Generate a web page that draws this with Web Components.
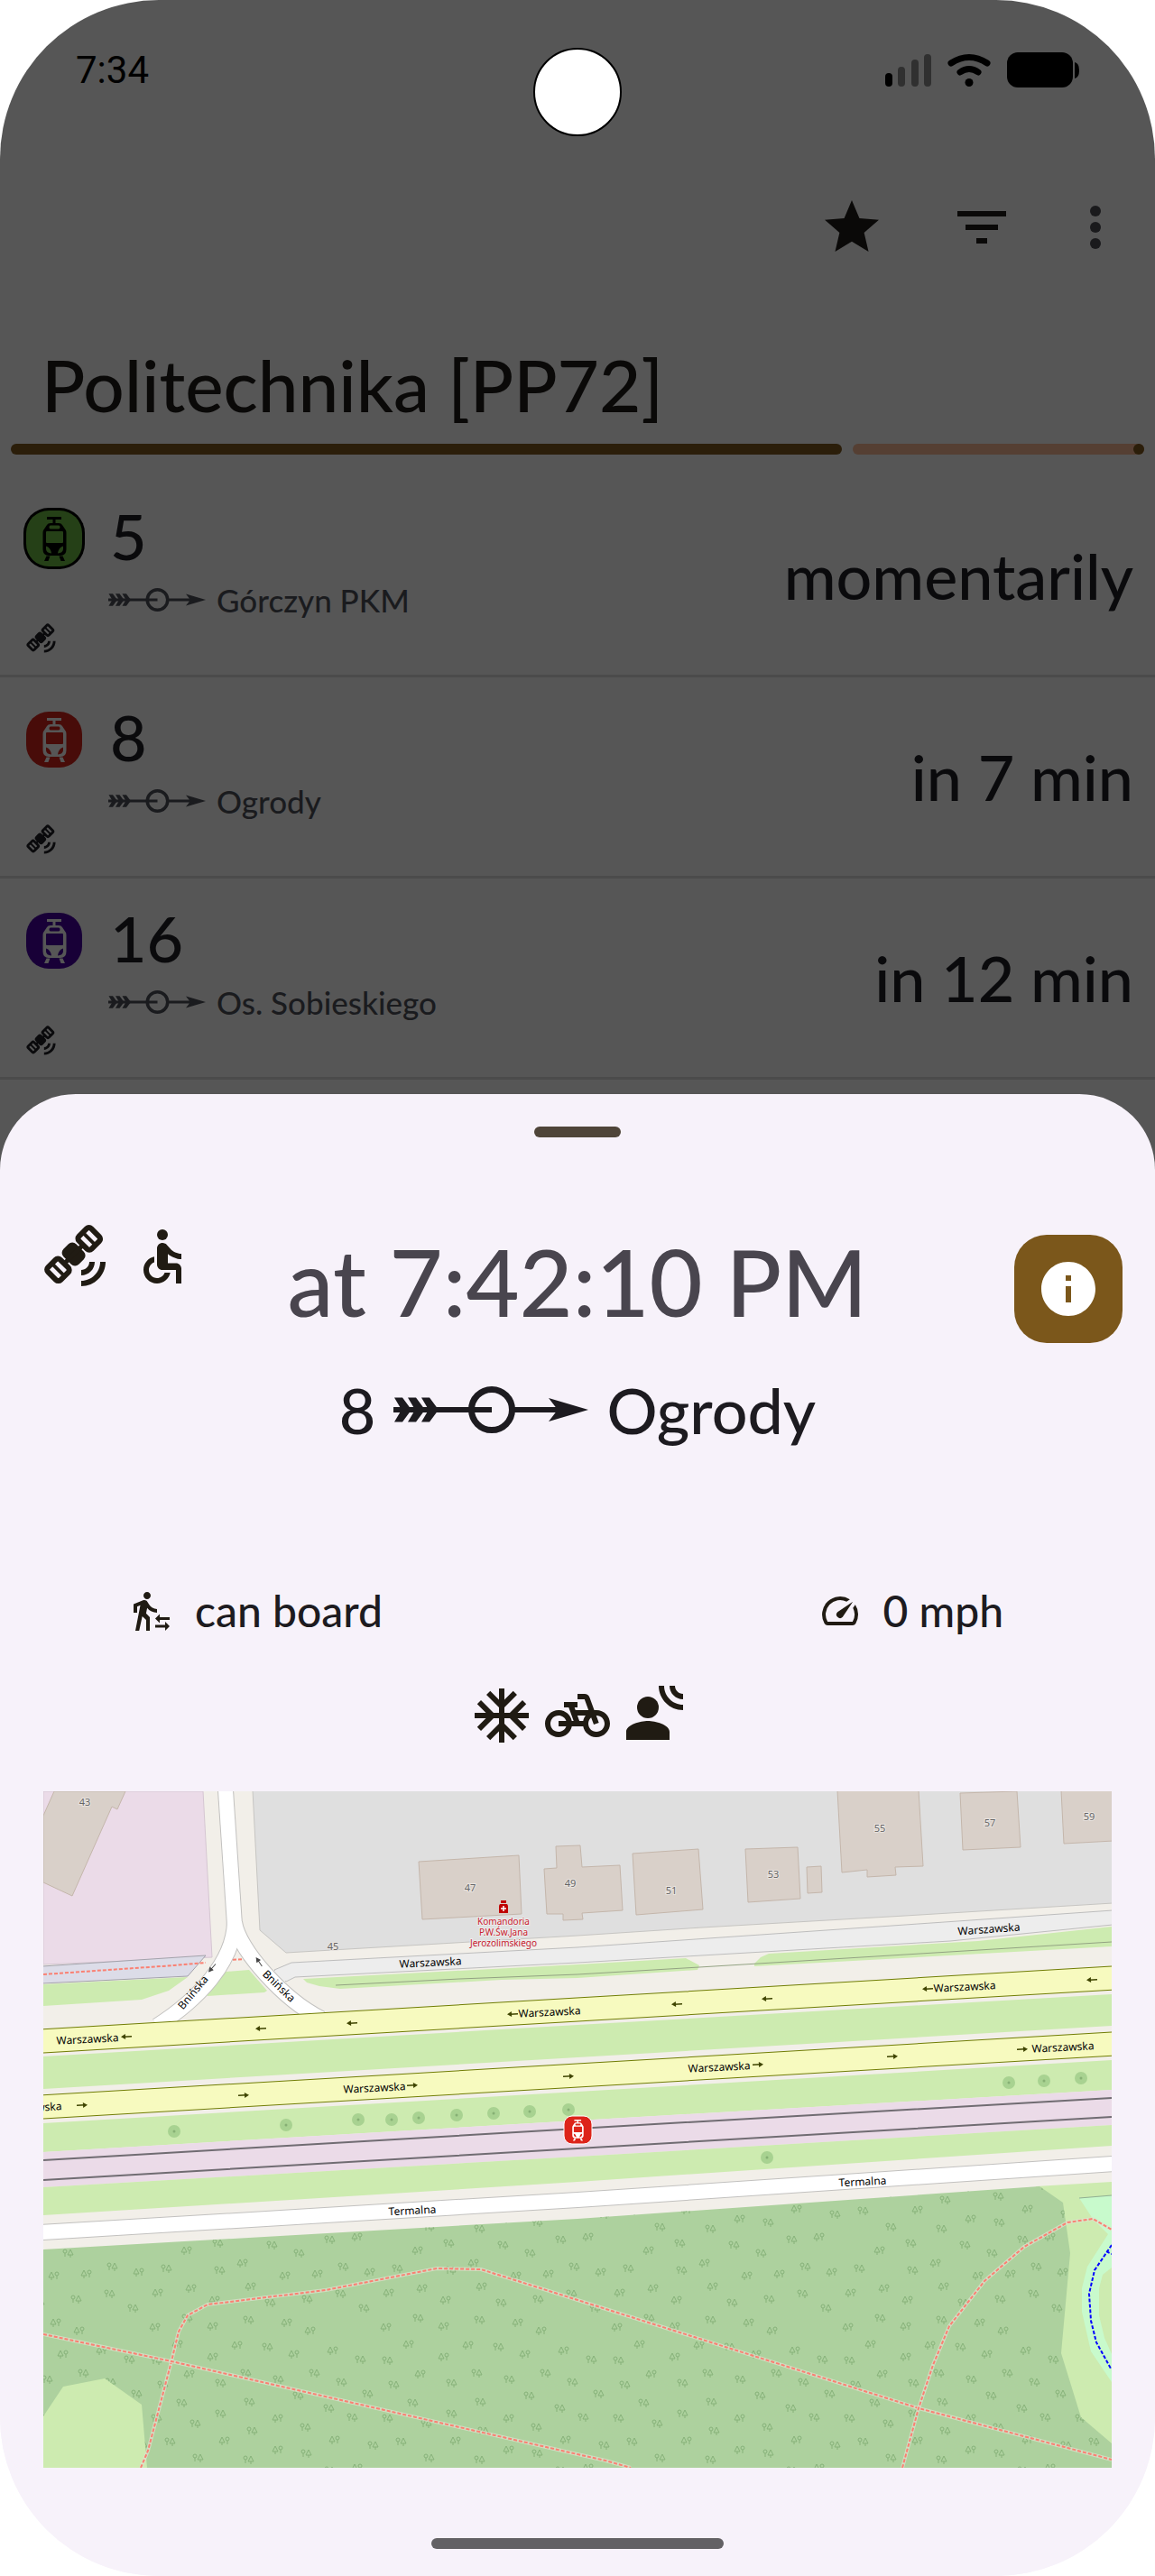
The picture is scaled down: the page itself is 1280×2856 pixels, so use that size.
<!DOCTYPE html>
<html lang="en">
<head>
<meta charset="utf-8">
<meta name="viewport" content="width=device-width, initial-scale=1">
<title>Politechnika [PP72]</title>
<style>
  body {
    margin: 0;
    background: #fff;
    font-family: Lato, "Noto Sans", sans-serif;
    font-weight: 500;
  }
</style>
</head>
<body>
<transit-phone>
  <status-bar slot="status" time="7:34"></status-bar>
  <stop-header slot="header">Politechnika [PP72]</stop-header>
  <departure-row line="5" when="momentarily" tone="green">Górczyn PKM</departure-row>
  <departure-row line="8" when="in 7 min" tone="red">Ogrody</departure-row>
  <departure-row line="16" when="in 12 min" tone="violet">Os. Sobieskiego</departure-row>
  <departure-sheet slot="sheet">
    <span slot="time">at 7:42:10 PM</span>
    <span slot="line">8</span>
    <span slot="headsign">Ogrody</span>
    <icon-fact slot="facts" icon="board">can board</icon-fact>
    <icon-fact slot="facts" icon="speed">0 mph</icon-fact>
    <vehicle-map slot="map"></vehicle-map>
  </departure-sheet>
</transit-phone>

<script>
const TRAM = `
  <path fill-rule="evenodd" d="M5 0H21V3H14.5V7H18Q21 7 22 9L26 15Q26.5 16 26.5 18V36Q26.5 43 20 43H7Q.5 43 .5 36V18Q.5 16 1 15L5 9Q6 7 9 7H11.5V3H5Z
    M9 9.5Q7.5 9.5 7.5 11.5T9 13.5H18Q19.5 13.5 19.5 11.5T18 9.5Z
    M5 16Q4 16 4 17V28Q4 29 5 29H22Q23 29 23 28V17Q23 16 22 16Z
    M4 32.500Q9 34 10 40.500Q4.500 40 4 36Z M23 32.500Q18 34 17 40.500Q22.500 40 23 36Z"/>
  <path d="M4.500 43.500H8.500L6.500 49H2Z M18.500 43.500H22.500L25 49H20.500Z"/>`

const ICONS = {
  star: '<path d="M12 17.27L18.18 21l-1.64-7.03L22 9.24l-7.19-.61L12 2 9.19 8.63 2 9.24l5.46 4.73L5.82 21z"/>',
  filter: '<path d="M10 18h4v-2h-4v2zM3 6v2h18V6H3zm3 7h12v-2H6v2z"/>',
  more: '<circle cx="12" cy="6" r="2"/><circle cx="12" cy="12" r="2"/><circle cx="12" cy="18" r="2"/>',
  info: '<path d="M12 2C6.480 2 2 6.480 2 12s4.480 10 10 10 10-4.480 10-10S17.520 2 12 2zm1 15h-2v-6h2v6zm0-8h-2V7h2v2z"/>',
  satellite: `
    <g transform="translate(11.200 11.200) rotate(-45)">
      <rect x="-3.300" y="-4" width="6.600" height="8" rx="2"/>
      <path d="M-5 0H5" stroke="currentColor" stroke-width="1.700"/>
      <g fill="none" stroke="currentColor">
        <rect x="4.900" y="-3.300" width="6.400" height="6.600" rx="1.200" stroke-width="2"/>
        <rect x="-11.300" y="-3.300" width="6.400" height="6.600" rx="1.200" stroke-width="2"/>
        <path d="M8.100 -3V3M-8.100 -3V3" stroke-width="1.300"/>
      </g>
    </g>
    <path d="M14 19v-2c1.660 0 3-1.340 3-3h2c0 2.760-2.240 5-5 5zM14 23v-2c3.870 0 7-3.130 7-7h2c0 4.970-4.030 9-9 9z"/>`,
  wheelchair: '<circle cx="12" cy="4" r="2"/><path d="M19 13v-2c-1.540.02-3.090-.75-4.070-1.830l-1.290-1.430c-.17-.19-.38-.34-.61-.45-.01 0-.01-.01-.02-.01H13c-.35-.2-.75-.3-1.190-.26C10.760 7.110 10 8.040 10 9.090V15c0 1.100.9 2 2 2h5v5h2v-5.500c0-1.100-.9-2-2-2h-3v-3.450c1.290 1.070 3.250 1.940 5 1.950zm-6.170 5c-.41 1.160-1.520 2-2.830 2-1.660 0-3-1.340-3-3 0-1.310.84-2.410 2-2.830V12.100c-2.280.46-4 2.480-4 4.900 0 2.760 2.240 5 5 5 2.420 0 4.440-1.720 4.900-4h-2.070z"/>',
  board: '<path d="M16.490 15.500v-1.750L14 16.250l2.490 2.500V17H22v-1.500zM19.510 19.750H14v1.500h5.510V23L22 20.500 19.510 18zM9.500 5.500c1.100 0 2-.9 2-2s-.9-2-2-2-2 .9-2 2 .9 2 2 2zM5.750 8.900 3 23h2.100l1.750-8L9 17v6h2v-7.550L8.950 13.400l.6-3C10.850 12 12.800 13 15 13v-2c-1.850 0-3.450-1-4.350-2.450l-.95-1.600C9.350 6.350 8.700 6 8 6c-.25 0-.5.05-.75.15L2 8.300V13h2V9.650l1.750-.75"/>',
  speed: '<path d="M20.380 8.570l-1.230 1.850a8 8 0 0 1-.22 7.580H5.070A8 8 0 0 1 15.580 6.850l1.850-1.230A10 10 0 0 0 3.350 19a2 2 0 0 0 1.720 1h13.850a2 2 0 0 0 1.740-1 10 10 0 0 0-.27-10.440zM10.590 15.410a2 2 0 0 0 2.830 0l5.660-8.490-8.490 5.660a2 2 0 0 0 0 2.830z"/>',
  snow: '<path d="M22 11h-4.170l3.240-3.240-1.410-1.420L15 11h-2V9l4.660-4.660-1.420-1.410L13 6.170V2h-2v4.170L7.760 2.930 6.340 4.340 11 9v2H9L4.340 6.340 2.930 7.760 6.170 11H2v2h4.170l-3.240 3.240 1.410 1.420L9 13h2v2l-4.660 4.660 1.420 1.410L11 17.830V22h2v-4.170l3.240 3.240 1.420-1.410L13 15v-2h2l4.660 4.660 1.410-1.420L17.830 13H22z"/>',
  bike: '<path d="M18.180 10l-1.700-4.680C16.190 4.530 15.440 4 14.600 4H12v2h2.600l1.460 4h-4.810l-.36-1H12V7H7v2h1.750l1.820 5H9.900c-.44-2.230-2.310-3.880-4.650-3.990C2.450 9.870 0 12.200 0 15c0 2.800 2.200 5 5 5 2.460 0 4.450-1.690 4.900-4h4.200c.44 2.230 2.310 3.880 4.650 3.990 2.800.13 5.250-2.190 5.250-5 0-2.800-2.200-5-5-5h-.82zM7.820 16c-.4 1.170-1.490 2-2.820 2-1.680 0-3-1.320-3-3s1.320-3 3-3c1.330 0 2.420.83 2.820 2H5v2h2.820zm6.280-2h-1.400l-.73-2H15c-.44.58-.76 1.250-.9 2zm4.900 4c-1.680 0-3-1.320-3-3 0-.93.41-1.730 1.050-2.280l.96 2.640 1.880-.68-.97-2.670c.03 0 .06-.01.08-.01 1.680 0 3 1.320 3 3s-1.320 3-3 3z"/>',
  voice: '<circle cx="10" cy="9" r="4"/><path d="M10 14c-2.670 0-8 1.340-8 4v3h16v-3c0-2.660-5.330-4-8-4zM14 1h2c0 3.870 3.130 7 7 7v2c-4.970 0-9-4.030-9-9zM18 1h2c0 1.660 1.340 3 3 3v2c-2.760 0-5-2.240-5-5z"/>',
}

// Base class: shadow root from the subclass's css and html
class BaseElement extends HTMLElement {
  constructor() {
    super()
    this.attachShadow({ mode: 'open' })
  }

  connectedCallback() {
    this.shadowRoot.innerHTML = `<style>${this.css()}</style>${this.html()}`
  }
}

/** <ui-icon name="star"> — 24-unit glyph, sized by --icon-size */
class UiIcon extends BaseElement {
  css() {
    return `
      :host { display: block; flex: none; width: var(--icon-size, 72px); height: var(--icon-size, 72px); }
      svg { display: block; width: 100%; height: 100%; fill: currentColor; overflow: visible; }
    `
  }
  html() {
    return `<svg viewBox="0 0 24 24" aria-hidden="true">${ICONS[this.getAttribute('name')]}</svg>`
  }
}

/** <heading-arrow> — feathered arrow through a ring */
class HeadingArrow extends BaseElement {
  css() {
    return `
      :host { display: block; flex: none; width: var(--arrow-width, 108px); }
      svg { display: block; width: 100%; fill: currentColor; }
    `
  }
  html() {
    const feather = 'M1 14.500H10L20 28L10 41.500H1L9 28Z'
    return `
      <svg viewBox="0 0 216 56" aria-hidden="true">
        <path d="${feather}"/>
        <path d="${feather}" transform="translate(15)"/>
        <path d="${feather}" transform="translate(30)"/>
        <path d="M0 25H109V31H0ZM134 25H186V31H134ZM172 15L216 28L172 41L182 28Z"/>
        <circle cx="109" cy="28" r="22.500" fill="none" stroke="currentColor" stroke-width="7"/>
      </svg>`
  }
}

class StatusBar extends BaseElement {
  css() {
    return `
      :host {
        display: flex;
        align-items: center;
        justify-content: space-between;
        height: 156px;
        padding: 0 84px;
        color: #000;
        font: 42px/48px Roboto, sans-serif;
        position: relative;
      }
      .camera {
        position: absolute;
        left: 50%;
        top: 53px;
        width: 98px;
        height: 98px;
        margin-left: -49px;
        box-sizing: border-box;
        border: 2px solid #000;
        border-radius: 50%;
        background: #fff;
      }
      .icons { width: 215px; height: 40px; }
    `
  }
  html() {
    return `
      <time>${this.getAttribute('time')}</time>
      <div class="camera"></div>
      <svg class="icons" viewBox="0 0 215 40" aria-hidden="true">
        <rect x="0" y="23" width="8" height="15" rx="4"/>
        <g fill="#303030">
          <rect x="14" y="16" width="8" height="22" rx="4"/>
          <rect x="29" y="8" width="8" height="30" rx="4"/>
          <rect x="43" y="2" width="8" height="36" rx="4"/>
        </g>
        <g fill="none" stroke="#000" stroke-width="7" stroke-linecap="round">
          <path d="M73 12Q93 -1 113 12"/>
          <path d="M83 22Q93 15 103 22"/>
        </g>
        <circle cx="93" cy="33.500" r="4.500"/>
        <rect x="135" y="0" width="73" height="39" rx="12"/>
        <path d="M210 11Q215 12 215 20T210 29Z"/>
      </svg>`
  }
}

class StopHeader extends BaseElement {
  css() {
    return `
      :host { display: block; padding-top: 60px; color: #0a0908; }
      nav { display: flex; justify-content: flex-end; padding-right: 30px; }
      button {
        display: block;
        padding: 0;
        border: 0;
        background: none;
        color: inherit;
        cursor: pointer;
      }
      button + button { margin-left: 72px; }
      button.more { margin-left: 54px; color: #1a1a1c; }
      h1 { margin: 90px 46px 18px; font-weight: 500; font-size: 80px; line-height: 96px; }
      .progress { display: flex; gap: 12px; margin: 0 12px; }
      .done, .left { height: 12px; border-radius: 6px; }
      .done { flex: 74; background: #2b1e0a; }
      .left { flex: 26; background: #553f33; }
      .left::after {
        content: "";
        display: block;
        width: 12px;
        height: 12px;
        margin-left: auto;
        border-radius: 6px;
        background: #2b1e0a;
      }
    `
  }
  html() {
    return `
      <nav>
        <button aria-label="Favourite"><ui-icon name="star"></ui-icon></button>
        <button aria-label="Filter"><ui-icon name="filter"></ui-icon></button>
        <button class="more" aria-label="More"><ui-icon name="more"></ui-icon></button>
      </nav>
      <h1><slot></slot></h1>
      <div class="progress" role="progressbar" aria-valuenow="74">
        <div class="done"></div>
        <div class="left"></div>
      </div>`
  }
}

class DepartureRow extends BaseElement {
  css() {
    return `
      :host {
        display: flex;
        height: 220px;
        border-bottom: 3px solid #4b4b4b;
        color: #0a0a0c;
      }
      .marks {
        display: flex;
        flex-direction: column;
        justify-content: space-between;
        box-sizing: border-box;
        width: 120px;
        padding: 38px 29px 23px;
        --icon-size: 34px;
      }
      .badge {
        display: flex;
        align-items: center;
        justify-content: center;
        width: 62px;
        height: 62px;
        border-radius: 25px;
      }
      .badge svg { width: 27px; height: 49px; fill: currentColor; }
      .red { background: #480c09; color: #565656; }
      .violet { background: #180037; color: #565656; }
      .green { background: #254017; color: #000; box-shadow: 0 0 0 3px #000; }
      .main { flex: 1; padding-top: 24px; }
      .line { padding-left: 2px; font-size: 70px; line-height: 84px; }
      .heading {
        display: flex;
        align-items: center;
        gap: 12px;
        margin-top: 8px;
        color: #1a1b1e;
        font-size: 35px;
        line-height: 42px;
      }
      .when { align-self: center; padding-right: 24px; font-size: 70px; line-height: 84px; }
    `
  }
  html() {
    return `
      <div class="marks">
        <div class="badge ${this.getAttribute('tone')}"><svg viewBox="0 0 27 49" aria-hidden="true">${TRAM}</svg></div>
        <ui-icon name="satellite"></ui-icon>
      </div>
      <div class="main">
        <div class="line">${this.getAttribute('line')}</div>
        <div class="heading"><heading-arrow></heading-arrow><slot></slot></div>
      </div>
      <div class="when">${this.getAttribute('when')}</div>`
  }
}

class IconFact extends BaseElement {
  css() {
    return `
      :host {
        display: flex;
        align-items: center;
        gap: 24px;
        color: #1d1b20;
        font-size: 48px;
        line-height: 58px;
        --icon-size: 48px;
      }
      ui-icon { color: #201b13; }
    `
  }
  html() {
    return `<ui-icon name="${this.getAttribute('icon')}"></ui-icon><slot></slot>`
  }
}

class DepartureSheet extends BaseElement {
  css() {
    return `
      :host {
        display: block;
        margin-top: 16px;
        padding: 36px 0 30px;
        border-radius: 84px 84px 0 0;
        background: #f7f2fa;
        color: #1d1b20;
      }
      .handle, .home { height: 12px; margin: 0 auto; border-radius: 6px; }
      .handle { width: 96px; background: #4f4539; }
      .home { width: 324px; margin-top: 78px; background: #636164; }
      header {
        display: grid;
        grid-template-columns: 1fr auto 1fr;
        align-items: start;
        padding: 96px 36px 0 48px;
      }
      .flags { display: flex; gap: 24px; color: #201b13; }
      .time { margin-right: 12px; color: #49454e; font-size: 102px; line-height: 128px; }
      button {
        display: grid;
        place-items: center;
        justify-self: end;
        width: 120px;
        height: 120px;
        margin-top: 12px;
        padding: 0;
        border: 0;
        border-radius: 36px;
        background: #7b571b;
        color: #fff;
        cursor: pointer;
      }
      .route {
        display: flex;
        align-items: center;
        justify-content: center;
        gap: 20px;
        margin-top: 32px;
        font-size: 70px;
        line-height: 84px;
        --arrow-width: 216px;
      }
      .facts { display: flex; justify-content: space-between; padding: 152px 168px 0 144px; }
      .amenities { display: flex; justify-content: center; gap: 12px; margin: 51px 0 48px; color: #201b13; }
      .map { margin: 0 48px; }
    `
  }
  html() {
    return `
      <div class="handle"></div>
      <header>
        <div class="flags"><ui-icon name="satellite"></ui-icon><ui-icon name="wheelchair"></ui-icon></div>
        <div class="time"><slot name="time"></slot></div>
        <button aria-label="Details"><ui-icon name="info"></ui-icon></button>
      </header>
      <div class="route">
        <slot name="line"></slot>
        <heading-arrow></heading-arrow>
        <slot name="headsign"></slot>
      </div>
      <div class="facts"><slot name="facts"></slot></div>
      <div class="amenities">
        <ui-icon name="snow"></ui-icon>
        <ui-icon name="bike"></ui-icon>
        <ui-icon name="voice"></ui-icon>
      </div>
      <div class="map"><slot name="map"></slot></div>
      <div class="home"></div>`
  }
}

// Tree pairs of the forest fill, one 256-unit tile: x, y, conifer first (1) or not (0)
const TREES = [
  [33,18,1],[67,10,0],[127,12,0],[191,6,0],[222,3,1],[10,38,0],[69,40,0],[95,32,1],[157,21,0],
  [142,46,1],[178,44,1],[206,36,0],[236,42,1],[1,65,1],[38,60,1],[64,73,1],[104,58,1],[125,76,0],
  [166,72,0],[203,66,0],[229,82,0],[254,103,1],[33,93,0],[62,102,1],[101,95,0],[144,98,1],
  [170,107,1],[23,122,1],[89,123,1],[122,125,0],[152,133,1],[195,129,1],[62,136,1],[225,139,0],
  [255,140,0],[36,155,1],[98,154,0],[174,154,0],[70,165,0],[134,161,0],[204,164,0],[6,167,0],
  [27,187,0],[102,186,0],[156,179,0],[190,193,0],[233,177,0],[70,199,0],[134,204,1],[42,210,0],
  [105,218,0],[164,214,0],[216,203,0],[255,204,0],[14,230,0],[75,229,1],[197,228,1],[239,234,0],
  [45,248,0],[101,250,0],[134,239,1],[165,243,0],
]

const STREET_TREES = [
  [145,377],[269,370],[349,364],[386,364],[416,362],[458,359],[499,357],[539,355],[582,353],
  [1070,323],[1109,321],[1150,318],[802,406],
]

const BUILDINGS = [
  'M0 27L12 0H91L82 20L76 17L32 116L0 101Z',
  'M416 78L527 71L530 136L420 142Z',
  'M568 61L595 60L597 84L639 82L642 132L597 135L598 142L576 143V136H558L555 86L569 85Z',
  'M653 69L726 64L731 131L657 137Z',
  'M778 64L836 62L839 119L781 123Z',
  'M846 84L862 83L863 112L847 113Z',
  'M880 -1H970L975 83L944 84L945 93L913 95V87L885 90Z',
  'M1016 2L1079 0L1083 62L1019 65Z',
  'M1128 -1H1186V55L1131 58Z',
]

const HOUSE_NUMBERS = [
  [46,12,43],[473,107,47],[584,102,49],[696,110,51],[809,92,53],[927,41,55],[1049,35,57],
  [1159,28,59],[321,172,45],
]

const STREET_NAMES = [
  [429,190,-3,'Warszawska'],[1048,153,-4,'Warszawska'],[49,275,-3,'Warszawska'],
  [561,245,-3,'Warszawska'],[1021,217,-3,'Warszawska'],[367,329,-3,'Warszawska'],
  [749,306,-3,'Warszawska'],[1130,284,-3,'Warszawska'],[-14,351,-3,'Warszawska'],
  [409,465,-3,'Termalna'],[908,433,-3,'Termalna'],[166,223,-50,'Bnińska'],[261,216,44,'Bnińska'],
]

// One-way arrows: x, y, rotation
const ONE_WAY = [
  [92,272,177],[241,263,177],[342,257,177],[520,247,177],[702,236,177],[802,230,177],
  [980,219,177],[1162,209,177],[43,348,-3],[222,337,-3],[409,326,-3],[582,316,-3],
  [792,303,-3],[941,294,-3],[1085,286,-3],
]

const PATHS = [
  'M108 750L116 731L142 632L150 599L160 581L182 569L313 553L436 529L485 530L592 564L970 684L1184 741',
  'M0 602L142 632L592 735L623 742L651 750',
  'M952 750L970 684L986 636L1004 593L1043 543L1087 505L1135 478L1163 474L1184 486',
]

class VehicleMap extends BaseElement {
  css() {
    return `
      :host { display: block; }
      svg { display: block; width: 100%; font-family: "Noto Sans", sans-serif; font-weight: 400; }
      text { text-anchor: middle; }
      .grass { fill: #cdebb0; }
      .rail-bed { fill: #ebdbe8; }
      .building { fill: #d9d0c9; stroke: #c4b6ab; }
      .number { font-size: 11px; fill: #666; stroke: #e9e4e0; stroke-width: 2px; paint-order: stroke; }
      .street { font-size: 12px; fill: #000; }
      .shop { font-size: 10px; fill: #c9202c; stroke: #ececec; stroke-width: 2px; paint-order: stroke; }
      .casing { fill: none; stroke: #c2c1bf; stroke-width: 18; }
      .road { fill: none; stroke: #fff; stroke-width: 16; }
      .main-casing { fill: none; stroke: #707d05; stroke-width: 27; }
      .main-road { fill: none; stroke: #f7fabf; stroke-width: 25; }
      .path-casing { fill: none; stroke: #dfe2d0; stroke-opacity: .7; stroke-width: 4; }
      .path { fill: none; stroke: #fa8072; stroke-width: 2; stroke-dasharray: 4 2; }
    `
  }

  _forest() {
    let out = ''
    for (let ty = -1; ty < 2; ty++) {
      for (let tx = -1; tx < 5; tx++) {
        for (const [x, y, conifer] of TREES) {
          out += `<use href="#${conifer ? 'conifer' : 'leafy'}" x="${126 + tx * 256 + x}" y="${491 + ty * 256 + y}"/>`
        }
      }
    }
    return out
  }

  html() {
    const roads = [
      'M202 -1L212 148',
      'M212 145C211 190 170 232 126 260',
      'M212 145C216 175 266 231 308 252',
    ]
    return `
      <svg viewBox="0 0 1184 750" role="img" aria-label="Vehicle position">
        <defs>
          <path id="woods" d="M0 508L592 474L1104 438L1130 456L1138 512L1128 623L1150 694L1184 723V750H0Z"/>
          <clipPath id="in-woods"><use href="#woods"/></clipPath>
          <g id="leafy" fill="none" stroke="#86b179">
            <circle cx="-3" cy="-2" r="2"/><path d="M-3 0V4M3 -4L0 2H6ZM3 2V5"/>
          </g>
          <g id="conifer" fill="none" stroke="#86b179">
            <circle cx="3" cy="-2" r="2"/><path d="M3 0V4M-3 -4L-6 2H0ZM-3 2V5"/>
          </g>
        </defs>
        <rect width="1184" height="750" fill="#f2efe9"/>

        <!-- built-up areas north of the street -->
        <path d="M0 0H177L187 184L0 192Z" fill="#ebdbe8" stroke="#d5c6d2"/>
        <path d="M232 -1L240 154L269 179L592 160L730 151L955 138L1185 124V-1Z" fill="#dfdfdf" stroke="#c6c5c2"/>
        ${BUILDINGS.map((d) => `<path class="building" d="${d}"/>`).join('')}
        <path d="M-1 194L180 182L160 205L-1 213Z" fill="#dcdce8" stroke="#a3a2ab"/>
        <path class="path" d="M0 203L145 193L180 190M204 187L229 186"/>
        <path d="M256 198L275 190L592 173L955 148L1013 144L1185 132V148L1005 166L592 190L279 206L269 211Z" fill="#ededed" stroke="#bdbdbd"/>
        <path d="M268 210L257 199" stroke="#ededed" stroke-width="3"/>

        <!-- verges -->
        <path class="grass" d="M0 214L160 206L139 221L109 231L0 238Z"/>
        <path class="grass" d="M202 200L228 198L248 221L245 223L182 227L180 224Z"/>
        <path class="grass" d="M288 208L592 192L712 185L727 193L725 198L592 207L508 209L329 219L306 216L292 212Z"/>
        <path class="grass" d="M788 191L795 184L804 180L1036 166L1184 150V172L788 194Z"/>
        <path d="M324 215L461 208L592 203L727 195L1184 167" fill="none" stroke="#93a283"/>
        <path class="grass" d="M0 294L592 259L1184 225V260L592 295L0 330Z"/>
        <path class="grass" d="M0 368L592 333L1184 298V331L609 364L0 400Z"/>
        <path class="rail-bed" d="M0 400L609 364L1184 331V370L948 384L592 405L0 439Z"/>
        <path class="grass" d="M0 439L592 405L948 384L1184 370V393L592 433L0 470Z"/>
        <path d="M0 409L609 373L1184 340M0 431L592 396L1184 361" fill="none" stroke="#706c72" stroke-width="2"/>

        <!-- roads -->
        ${roads.map((d) => `<path class="casing" d="${d}"/>`).join('')}
        ${roads.map((d) => `<path class="road" d="${d}"/>`).join('')}
        <path class="main-casing" d="M-2 277L592 242L1186 207M-2 350L592 315L1186 280"/>
        <path class="main-road" d="M-2 277L592 242L1186 207M-2 350L592 315L1186 280"/>
        <path class="casing" d="M-2 489L592 453L1186 413"/>
        <path class="road" d="M-2 489L592 453L1186 413"/>

        <!-- park -->
        <path class="grass" d="M1100 438L1184 433V750H1100Z"/>
        <use href="#woods" fill="#add19e"/>
        <g clip-path="url(#in-woods)">${this._forest()}</g>
        <path class="grass" d="M0 693L22 660L68 651L109 680L115 750H0Z"/>
        <path d="M1148 451L1184 448V655L1161 621L1151 577V551L1157 527L1180 491L1163 474Z" fill="#c8facc"/>
        <path class="grass" d="M1184 528L1174 536L1170 551V581L1176 606L1184 624Z"/>
        <path d="M1148 451L1184 448" stroke="#8fae90"/>
        <path d="M1184 503L1165 531L1159 557L1161 587L1167 611L1183 640M1178 510L1184 513" fill="none" stroke="#00f" stroke-width="2" stroke-dasharray="4 2"/>
        ${PATHS.map((d) => `<path class="path-casing" d="${d}"/><path class="path" d="${d}"/>`).join('')}
        ${STREET_TREES.map(([x, y]) => `<circle cx="${x}" cy="${y}" r="7" fill="#a8d291"/><circle cx="${x}" cy="${y}" r="1.500" fill="#86b074"/>`).join('')}

        <!-- labels -->
        ${HOUSE_NUMBERS.map(([x, y, n]) => `<text class="number" x="${x}" y="${y + 4}">${n}</text>`).join('')}
        ${STREET_NAMES.map(([x, y, a, s]) => `<text class="street" y="4" transform="translate(${x} ${y}) rotate(${a})">${s}</text>`).join('')}
        ${ONE_WAY.map(([x, y, a]) => `<path d="M-6 0H3" transform="translate(${x} ${y}) rotate(${a})" stroke="#3f4500" stroke-width="1.500"/><path d="M6 0L1 -3V3Z" transform="translate(${x} ${y}) rotate(${a})" fill="#3f4500"/>`).join('')}
        <g fill="#444" stroke="#444">
          <path d="M-6 0H3M5 0L1 -2V2Z" transform="translate(187 196) rotate(131)"/>
          <path d="M-6 0H3M5 0L1 -2V2Z" transform="translate(239 189) rotate(-124)"/>
        </g>
        <path d="M507 121H513V124H507ZM506 125H514Q515 126 515 128V135H505V128Q505 126 506 125Z" fill="#bf0000"/>
        <path d="M510 127V133M507 130H513" stroke="#fff" stroke-width="1.500"/>
        <text class="shop" x="510" y="148">Komandoria</text>
        <text class="shop" x="510" y="160">P.W.Św.Jana</text>
        <text class="shop" x="510" y="172">Jerozolimskiego</text>

        <!-- vehicle -->
        <rect x="577" y="360" width="31" height="31" rx="9" fill="#dd241a" stroke="#fff"/>
        <g transform="translate(586 364) scale(.48)" fill="#fff">${TRAM}</g>
      </svg>`
  }
}

class TransitPhone extends BaseElement {
  css() {
    return `
      :host {
        display: block;
        overflow: hidden;
        border-radius: 176px;
        background: linear-gradient(#565656 60%, #f7f2fa 60%);
      }
      .departures { margin-top: 24px; }
    `
  }
  html() {
    return `
      <slot name="status"></slot>
      <slot name="header"></slot>
      <div class="departures"><slot></slot></div>
      <slot name="sheet"></slot>`
  }
}

customElements.define('ui-icon', UiIcon)
customElements.define('heading-arrow', HeadingArrow)
customElements.define('status-bar', StatusBar)
customElements.define('stop-header', StopHeader)
customElements.define('departure-row', DepartureRow)
customElements.define('icon-fact', IconFact)
customElements.define('departure-sheet', DepartureSheet)
customElements.define('vehicle-map', VehicleMap)
customElements.define('transit-phone', TransitPhone)
</script>
</body>
</html>
